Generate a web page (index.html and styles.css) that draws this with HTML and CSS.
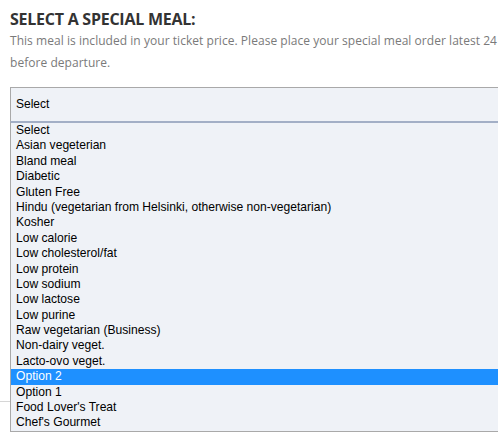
FILE: index.html
```html
<!DOCTYPE html>
<html>
<head>
<meta charset="utf-8">
<link rel="stylesheet" href="styles.css">
</head>
<body>
<div class="page">
  <h2 class="title">SELECT A SPECIAL MEAL:</h2>
  <p class="desc">This meal is included in your ticket price. Please place your special meal order latest 24<br>before departure.</p>
  <div class="field">
    <div class="select">Select</div>
    <ul class="list">
      <li>Select</li>
      <li>Asian vegeterian</li>
      <li>Bland meal</li>
      <li>Diabetic</li>
      <li>Gluten Free</li>
      <li>Hindu (vegetarian from Helsinki, otherwise non-vegetarian)</li>
      <li>Kosher</li>
      <li>Low calorie</li>
      <li>Low cholesterol/fat</li>
      <li>Low protein</li>
      <li>Low sodium</li>
      <li>Low lactose</li>
      <li>Low purine</li>
      <li>Raw vegetarian (Business)</li>
      <li>Non-dairy veget.</li>
      <li>Lacto-ovo veget.</li>
      <li class="active">Option 2</li>
      <li>Option 1</li>
      <li>Food Lover's Treat</li>
      <li>Chef's Gourmet</li>
    </ul>
  </div>
  <div class="sep"></div>
</div>
</body>
</html>
```
FILE: styles.css
```css
html, body {
  margin: 0;
  padding: 0;
  background: #ffffff;
}
.page {
  position: relative;
  padding: 9px 0 0 10px;
  height: 426px;
}
.title {
  margin: 0;
  font-family: "Open Sans", sans-serif;
  font-weight: 700;
  font-size: 16px;
  line-height: 20px;
  color: #333333;
  letter-spacing: -0.25px;
}
.desc {
  margin: 1px 0 0 0;
  font-family: "Open Sans", sans-serif;
  font-size: 12px;
  line-height: 21.5px;
  color: #7a7a7a;
  white-space: nowrap;
  letter-spacing: 0.04px;
}
.field {
  position: relative;
  margin-top: 14px;
}
.select {
  box-sizing: border-box;
  height: 35px;
  border: 1px solid #a9a9a9;
  border-right: none;
  border-bottom: 1px solid #9aa6bd;
  background: #eff2f7;
  font-family: "Liberation Sans", Arial, sans-serif;
  font-size: 12px;
  line-height: 33px;
  padding-left: 5px;
  color: #000;
}
.list {
  position: absolute;
  left: 0;
  right: 0;
  top: 34px;
  z-index: 2;
  margin: 0;
  padding: 0;
  list-style: none;
  background: #eff2f7;
  border-left: 1px solid #a9a9a9;
  border-bottom: 1px solid #a9a9a9;
  border-top: 2px solid #a3afc6;
  font-family: "Liberation Sans", Arial, sans-serif;
  font-size: 12.1px;
  color: #000;
}
.list li {
  height: 15.4px;
  line-height: 15.4px;
  padding-left: 5px;
  white-space: nowrap;
}
.list li.active {
  background: #1e90ff;
  color: #ffffff;
}
.sep {
  margin-top: 279px;
  margin-left: -10px;
  height: 1px;
  background: #d6d6d6;
}
```
